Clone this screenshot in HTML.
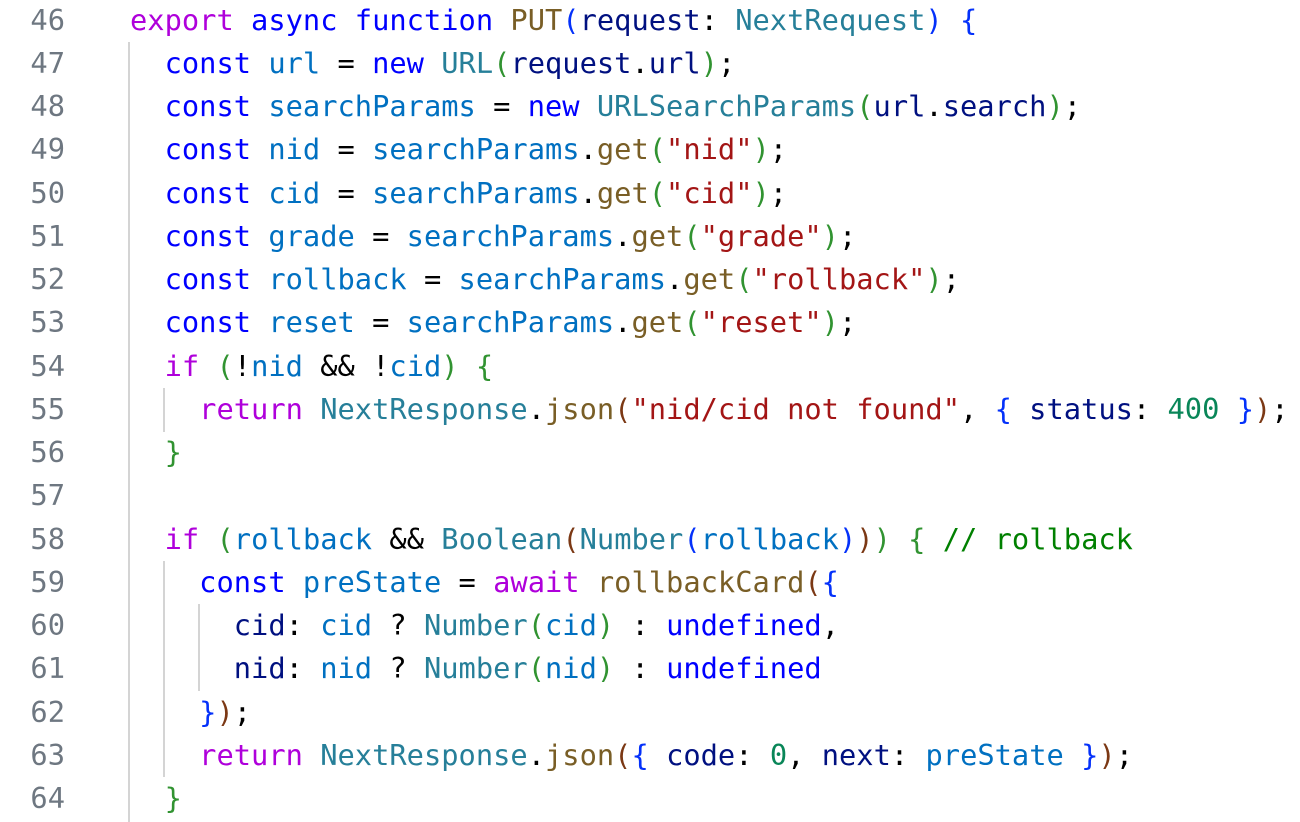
<!DOCTYPE html>
<html><head><meta charset="utf-8"><style>
html,body{margin:0;padding:0;background:#fff;width:1300px;height:822px;overflow:hidden}
.wrap{position:absolute;top:-1.5px;left:0;font-family:"DejaVu Sans Mono","Liberation Mono",monospace;font-size:28.72px;line-height:43.25px;color:#000;white-space:pre}
.ln{position:absolute;left:0;width:65px;text-align:right;color:#6e7781}
.code{position:absolute;left:130px}
.g{position:absolute;width:2px;background:#d4d4d4}
.kp{color:#af00db}.kb{color:#0000ff}.v{color:#0070c1}.t{color:#267f99}.f{color:#795e26}.s{color:#a31515}.n{color:#098658}.p{color:#001080}.c{color:#008000}
.b1{color:#0431fa}.b2{color:#319331}.b3{color:#7b3814}
</style></head><body>
<div class="g" style="left:128px;top:42px;height:780px"></div>
<div class="g" style="left:163px;top:388px;height:44px"></div>
<div class="g" style="left:163px;top:561px;height:216px"></div>
<div class="g" style="left:198px;top:604px;height:87px"></div>
<div class="wrap">
<div class="ln" style="top:0">46
47
48
49
50
51
52
53
54
55
56
57
58
59
60
61
62
63
64</div>
<div class="code" style="top:0"><span class="kp">export</span> <span class="kb">async</span> <span class="kb">function</span> <span class="f">PUT</span><span class="b1">(</span><span class="p">request</span>: <span class="t">NextRequest</span><span class="b1">)</span> <span class="b1">{</span>
  <span class="kb">const</span> <span class="v">url</span> = <span class="kb">new</span> <span class="t">URL</span><span class="b2">(</span><span class="p">request</span>.<span class="p">url</span><span class="b2">)</span>;
  <span class="kb">const</span> <span class="v">searchParams</span> = <span class="kb">new</span> <span class="t">URLSearchParams</span><span class="b2">(</span><span class="p">url</span>.<span class="p">search</span><span class="b2">)</span>;
  <span class="kb">const</span> <span class="v">nid</span> = <span class="v">searchParams</span>.<span class="f">get</span><span class="b2">(</span><span class="s">"nid"</span><span class="b2">)</span>;
  <span class="kb">const</span> <span class="v">cid</span> = <span class="v">searchParams</span>.<span class="f">get</span><span class="b2">(</span><span class="s">"cid"</span><span class="b2">)</span>;
  <span class="kb">const</span> <span class="v">grade</span> = <span class="v">searchParams</span>.<span class="f">get</span><span class="b2">(</span><span class="s">"grade"</span><span class="b2">)</span>;
  <span class="kb">const</span> <span class="v">rollback</span> = <span class="v">searchParams</span>.<span class="f">get</span><span class="b2">(</span><span class="s">"rollback"</span><span class="b2">)</span>;
  <span class="kb">const</span> <span class="v">reset</span> = <span class="v">searchParams</span>.<span class="f">get</span><span class="b2">(</span><span class="s">"reset"</span><span class="b2">)</span>;
  <span class="kp">if</span> <span class="b2">(</span>!<span class="v">nid</span> &amp;&amp; !<span class="v">cid</span><span class="b2">)</span> <span class="b2">{</span>
    <span class="kp">return</span> <span class="t">NextResponse</span>.<span class="f">json</span><span class="b3">(</span><span class="s">"nid/cid not found"</span>, <span class="b1">{</span> <span class="p">status</span>: <span class="n">400</span> <span class="b1">}</span><span class="b3">)</span>;
  <span class="b2">}</span>

  <span class="kp">if</span> <span class="b2">(</span><span class="v">rollback</span> &amp;&amp; <span class="t">Boolean</span><span class="b3">(</span><span class="t">Number</span><span class="b1">(</span><span class="v">rollback</span><span class="b1">)</span><span class="b3">)</span><span class="b2">)</span> <span class="b2">{</span> <span class="c">// rollback</span>
    <span class="kb">const</span> <span class="v">preState</span> = <span class="kp">await</span> <span class="f">rollbackCard</span><span class="b3">(</span><span class="b1">{</span>
      <span class="p">cid</span>: <span class="v">cid</span> ? <span class="t">Number</span><span class="b2">(</span><span class="v">cid</span><span class="b2">)</span> : <span class="kb">undefined</span>,
      <span class="p">nid</span>: <span class="v">nid</span> ? <span class="t">Number</span><span class="b2">(</span><span class="v">nid</span><span class="b2">)</span> : <span class="kb">undefined</span>
    <span class="b1">}</span><span class="b3">)</span>;
    <span class="kp">return</span> <span class="t">NextResponse</span>.<span class="f">json</span><span class="b3">(</span><span class="b1">{</span> <span class="p">code</span>: <span class="n">0</span>, <span class="p">next</span>: <span class="v">preState</span> <span class="b1">}</span><span class="b3">)</span>;
  <span class="b2">}</span></div>
</div>
</body></html>
